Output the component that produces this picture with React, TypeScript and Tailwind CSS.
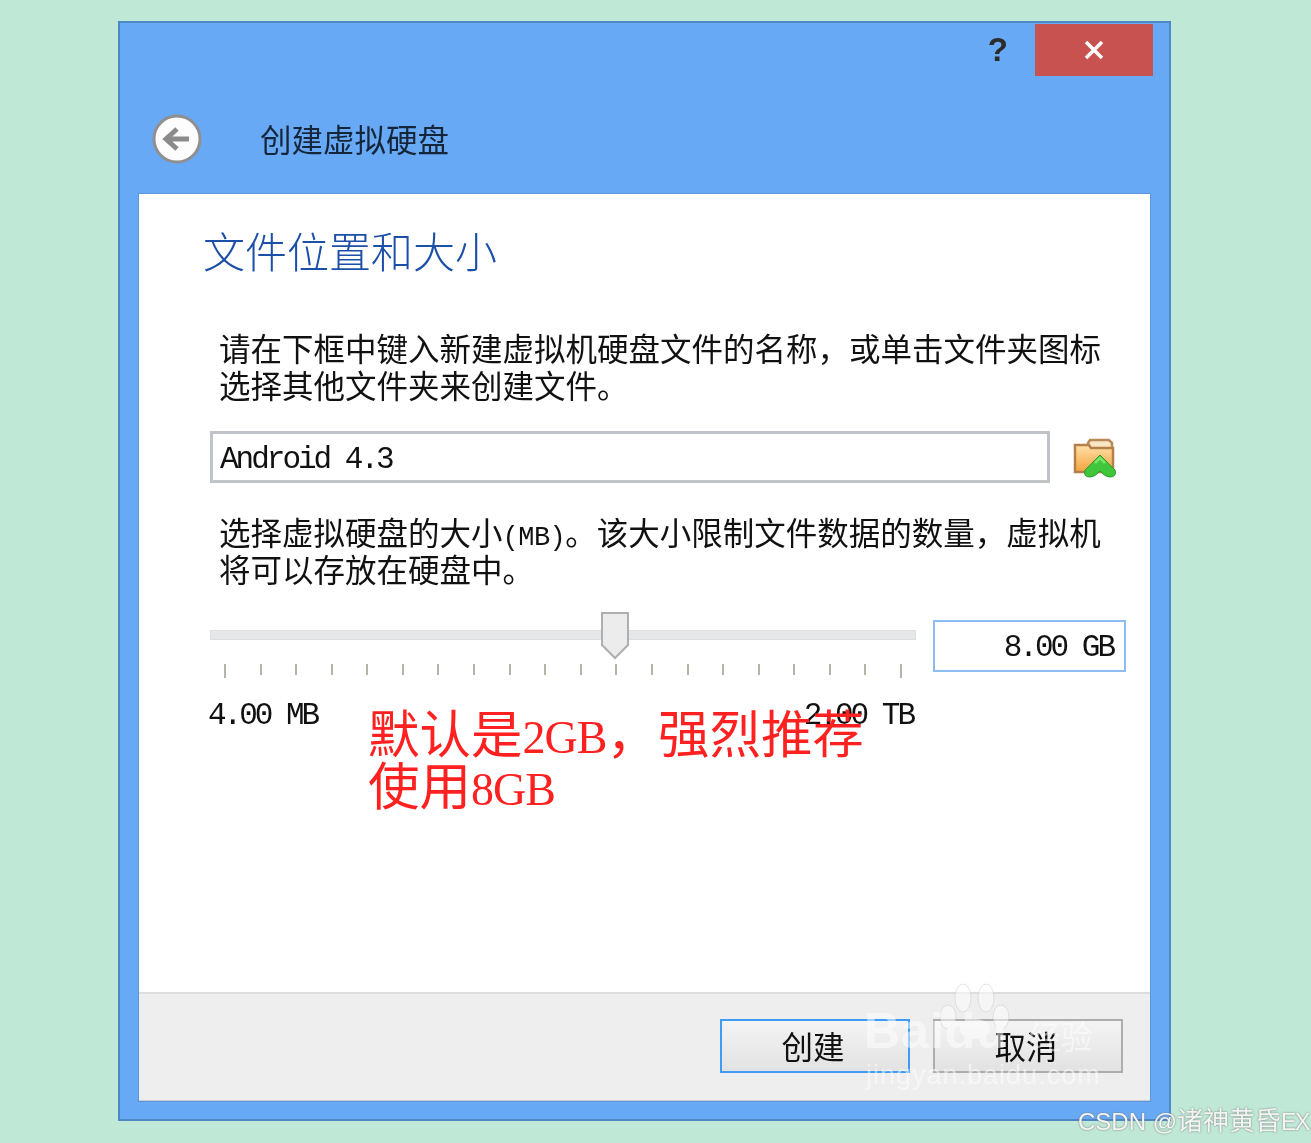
const cjk = "font-['Noto_Sans_CJK_SC',sans-serif]";

function Latin({ children }: { children: string }) {
  return (
    <span className="font-['Liberation_Mono','Noto_Sans_CJK_SC',monospace] text-[31px] leading-none tracking-[-3px]">
      {children}
    </span>
  );
}

function RedLatin({ children }: { children: string }) {
  return (
    <span className="font-['Liberation_Serif',serif] text-[46px] leading-[0] tracking-[-1px]">{children}</span>
  );
}

function BackIcon() {
  return (
    <svg width="50" height="50" viewBox="0 0 50 50">
      <circle cx="25" cy="25" r="23" fill="#fdfdfd" stroke="#8f8f8f" strokeWidth="3" />
      <path d="M37 25H15M25 15L14 25L25 35" fill="none" stroke="#8b8b8b" strokeWidth="5" />
    </svg>
  );
}

function FolderIcon() {
  return (
    <svg width="44" height="42" viewBox="0 0 44 42">
      <defs>
        <linearGradient id="folderFill" x1="0" y1="0" x2="0" y2="1">
          <stop offset="0" stopColor="#ffe0a8" />
          <stop offset="1" stopColor="#f7a23e" />
        </linearGradient>
      </defs>
      <path d="M15 6l2-3h19l3 3v24H15z" fill="#f8e6c4" stroke="#b98a58" strokeWidth="2.5" />
      <path d="M2 8h14l2 3h22v24H2z" fill="url(#folderFill)" stroke="#b57f4a" strokeWidth="2.5" />
      <path
        d="M12 33L27 18L42 33Q44 40 37 40Q32 40 27 34Q22 40 17 40Q10 40 12 33z"
        fill="#3fc63a"
        stroke="#2d9a2b"
        strokeWidth="1"
      />
      <path d="M22 26L27 21L32 26" fill="none" stroke="#7be468" strokeWidth="2.5" />
    </svg>
  );
}

function BaiduMark() {
  return (
    <div className="absolute left-[725px] top-[787px] w-[240px] h-[115px] opacity-50 text-white pointer-events-none">
      <svg width="100" height="60" viewBox="0 0 100 60" className="absolute left-[69px] top-0">
        <ellipse cx="30" cy="17" rx="8" ry="14" fill="#fff" stroke="#cccccc" />
        <ellipse cx="53" cy="17" rx="8" ry="14" fill="#fff" stroke="#cccccc" />
        <ellipse cx="15" cy="36" rx="8" ry="12" fill="#fff" stroke="#cccccc" />
        <ellipse cx="68" cy="36" rx="8" ry="12" fill="#fff" stroke="#cccccc" />
        <ellipse cx="42" cy="48" rx="15" ry="10" fill="#fff" />
      </svg>
      <span className="absolute left-0 top-[20px] font-['Liberation_Sans',sans-serif] text-[50px] font-bold leading-[60px] tracking-[1px]">
        Baidu
      </span>
      <span className={`absolute left-[165px] top-[34px] ${cjk} text-[32px] leading-[40px]`}>经验</span>
      <span className="absolute left-[2px] top-[78px] font-['Liberation_Sans',sans-serif] text-[27px] leading-[32px] tracking-[1px]">
        jingyan.baidu.com
      </span>
    </div>
  );
}

const ticks = Array.from({ length: 20 }, (_, i) => i);

export default function App() {
  return (
    <div className={`relative h-[1143px] w-full overflow-hidden bg-[#bfe8d6] pl-[118px] pt-[21px] blur-[0.5px] ${cjk}`}>
      <div className="flex h-[1100px] w-[1053px] flex-col border-2 border-[#4f86c4] bg-[#68a9f6]">
        <div className="flex h-[53px] items-start justify-end pr-[16px] pt-px">
          <span className="mr-[27px] mt-[7px] font-['Liberation_Sans',sans-serif] text-[33px] font-bold leading-[38px] text-[#2b2b2b]">
            ?
          </span>
          <button className="flex h-[52px] w-[118px] items-center justify-center bg-[#c85250]">
            <svg width="22" height="22" viewBox="0 0 22 22">
              <path d="M3 3L19 19M19 3L3 19" stroke="#fff" strokeWidth="3.5" />
            </svg>
          </button>
        </div>

        <div className="flex h-[117px] items-start pl-[32px] pt-[38px]">
          <BackIcon />
          <h1 className="ml-[58px] mt-[5px] text-[31.5px] leading-[38px] text-[#16263a]">创建虚拟硬盘</h1>
        </div>

        <div className="relative mx-[18px] flex h-[909px] flex-col border border-[#5b95dc] bg-white">
          <div className="flex-1">
            <h2 className="ml-[64px] mt-[34px] text-[42px] font-light leading-[44px] text-[#1b4fa8]">
              文件位置和大小
            </h2>
            <p className="ml-[80px] mt-[57px] whitespace-nowrap text-[31.5px] leading-[37px] text-[#111]">
              请在下框中键入新建虚拟机硬盘文件的名称，或单击文件夹图标
              <br />
              选择其他文件夹来创建文件。
            </p>

            <div className="ml-[71px] mt-[28px] flex items-start">
              <div className="flex h-[52px] w-[840px] items-center border-[3px] border-[#c0c3c7] pl-[7px] pt-[5px] text-[#111]">
                <Latin>Android 4.3</Latin>
              </div>
              <div className="ml-[23px] mt-[6px]">
                <FolderIcon />
              </div>
            </div>

            <p className="ml-[80px] mt-[30px] whitespace-nowrap text-[31.5px] leading-[37px] text-[#111]">
              选择虚拟硬盘的大小
              <span className="font-['Liberation_Mono',monospace] text-[27px] leading-[0] tracking-[-0.5px]">(MB)</span>
              。该大小限制文件数据的数量，虚拟机
              <br />
              将可以存放在硬盘中。
            </p>

            <div className="ml-[71px] mt-[33px] flex items-start">
              <div className="relative w-[706px]">
                <div className="mt-[10px] h-[10px] border border-[#dcdedf] bg-[#e5e7e8]" />
                <svg width="30" height="50" viewBox="0 0 30 50" className="absolute left-[390px] -top-[9px]">
                  <path d="M2 2H28V34L15 47L2 34z" fill="#ececec" stroke="#aeb0b0" strokeWidth="2" />
                </svg>
                <div className="mx-[14px] mt-[24px] flex h-[14px] items-start justify-between">
                  {ticks.map((t) => (
                    <span
                      key={t}
                      className={t === 0 || t === 19 ? "h-[14px] w-[2px] bg-[#b4b4aa]" : "h-[11px] w-[2px] bg-[#b4b4aa]"}
                    />
                  ))}
                </div>
                <div className="-ml-[2px] mt-[22px] flex justify-between pr-[3px] leading-[30px] text-[#111]">
                  <Latin>4.00 MB</Latin>
                  <Latin>2.00 TB</Latin>
                </div>
              </div>
              <div className="ml-[17px] flex h-[52px] w-[193px] items-center justify-end border-2 border-[#8dbcf0] pr-[11px] pt-[2px] text-[#111]">
                <Latin>8.00 GB</Latin>
              </div>
            </div>
          </div>

          <div className="flex h-[109px] justify-end gap-[23px] border-t-2 border-b border-t-[#dddddd] border-b-[#c8ccd0] bg-[#eeeeee] pr-[27px] pt-[25px]">
            <button className="flex h-[54px] w-[190px] items-center justify-center border-2 border-[#3f9bf5] bg-gradient-to-b from-[#f4f4f4] to-[#e2e2e2] pr-[4px] text-[31.5px] text-[#111]">
              创建
            </button>
            <button className="flex h-[54px] w-[190px] items-center justify-center border-2 border-[#adadad] bg-gradient-to-b from-[#f4f4f4] to-[#e2e2e2] pr-[4px] text-[31.5px] text-[#111]">
              取消
            </button>
          </div>

          <div className="absolute left-[229px] top-[511px] whitespace-nowrap text-[51.5px] leading-[52px] text-[#ff2020]">
            默认是<RedLatin>2GB</RedLatin>，强烈推荐
            <br />
            使用<RedLatin>8GB</RedLatin>
          </div>

          <BaiduMark />
        </div>
      </div>

      <div className="absolute left-[1078px] top-[1103px] whitespace-nowrap font-['Liberation_Sans','Noto_Sans_CJK_SC',sans-serif] text-[24px] leading-[36px] text-[#f4f4f4] [text-shadow:0_0_2px_#6f6f6f]">
        CSDN @<span className="text-[26px]">诸神黄昏</span>
        <span className="text-[23px] tracking-[-1.5px]">EX</span>
      </div>
    </div>
  );
}
